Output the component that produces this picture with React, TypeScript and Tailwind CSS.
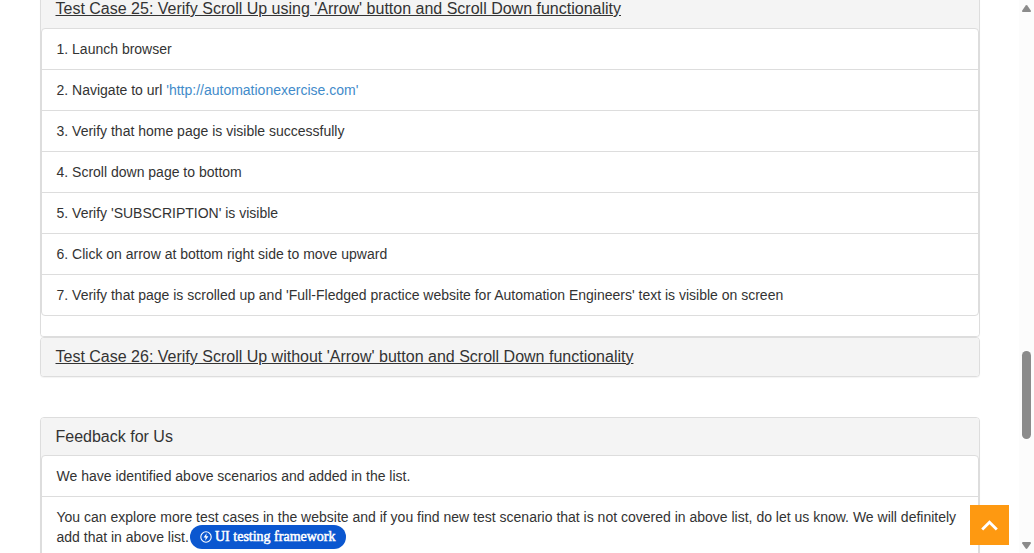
import type { ReactNode } from "react";
import clsx from "clsx";

const scrollSteps: ReactNode[] = [
  "1. Launch browser",
  <>
    2. Navigate to url{" "}
    <a href="http://automationexercise.com" className="text-[#428bca]">
      'http://automationexercise.com'
    </a>
  </>,
  "3. Verify that home page is visible successfully",
  "4. Scroll down page to bottom",
  "5. Verify 'SUBSCRIPTION' is visible",
  "6. Click on arrow at bottom right side to move upward",
  "7. Verify that page is scrolled up and 'Full-Fledged practice website for Automation Engineers' text is visible on screen",
];

const feedback: ReactNode[] = [
  "We have identified above scenarios and added in the list.",
  "You can explore more test cases in the website and if you find new test scenario that is not covered in above list, do let us know. We will definitely add that in above list.",
];

function Panel({ id, title, linked, items }: { id: string; title: string; linked?: boolean; items?: ReactNode[] }) {
  return (
    <section id={id} className="rounded border border-[#ddd] bg-white shadow-[0_1px_1px_rgba(0,0,0,0.05)]">
      <h4
        className={clsx(
          "bg-[#f4f4f4] px-[15px] py-[10px] text-base leading-[17px]",
          items ? "rounded-t-[3px]" : "rounded-[3px]",
          linked && "border-b border-transparent",
        )}
      >
        {linked ? (
          <a href={"#" + id} className="underline">
            {title}
          </a>
        ) : (
          title
        )}
      </h4>
      {items && (
        <div className="rounded-b-[3px] bg-[linear-gradient(#f4f4f4_0_4px,white_4px)] pb-5">
          <ul className="divide-y divide-[#ddd] rounded border border-[#ddd] bg-white">
            {items.map((item, i) => (
              <li key={i} className="px-[15px] py-[10px]">
                {item}
              </li>
            ))}
          </ul>
        </div>
      )}
    </section>
  );
}

function Scrollbar() {
  return (
    <div aria-hidden="true" className="flex w-[15px] shrink-0 flex-col items-center bg-[#fcfcfc] pt-[5px] pb-1">
      <svg width="9" height="7" viewBox="0 0 9 7" fill="#8b8b8b">
        <path d="M3.7.5Q4.5-.4 5.3.5L8.8 5.5Q9.2 7 8 7H1Q-.2 7 .2 5.5Z" />
      </svg>
      <div className="grow-[339]" />
      <div className="h-[88px] w-[9px] rounded-full bg-[#8b8b8b]" />
      <div className="grow-[103]" />
      <svg width="9" height="7" viewBox="0 0 9 7" fill="#8b8b8b">
        <path d="M3.7 6.5Q4.5 7.4 5.3 6.5L8.8 1.5Q9.2 0 8 0H1Q-.2 0 .2 1.5Z" />
      </svg>
    </div>
  );
}

export default function App() {
  return (
    <div className="flex h-screen overflow-hidden bg-white font-['Liberation_Sans',Arial,sans-serif] text-sm leading-5 text-[#333]">
      <div className="relative min-w-0 grow overflow-hidden">
        <main className="mx-auto -mt-[11px] max-w-[940px]">
          <Panel
            id="collapse25"
            title="Test Case 25: Verify Scroll Up using 'Arrow' button and Scroll Down functionality"
            linked
            items={scrollSteps}
          />
          <Panel
            id="collapse26"
            title="Test Case 26: Verify Scroll Up without 'Arrow' button and Scroll Down functionality"
            linked
          />
          <div className="mt-10">
            <Panel id="feedback" title="Feedback for Us" items={feedback} />
          </div>
        </main>
        <a
          href="#framework"
          className="absolute bottom-1 left-[190px] flex h-6 items-center gap-[3px] rounded-full bg-[#0b57d0] px-[10px] font-['Liberation_Serif',serif] text-sm whitespace-nowrap text-white [-webkit-text-stroke:0.5px_white]"
        >
          <svg width="12" height="12" viewBox="0 0 12 12" fill="none" stroke="white" strokeWidth="1.1">
            <circle cx="6" cy="6" r="5.2" />
            <path d="M6.6 2.2 3.6 6.6H5.6L5.3 9.8 8.4 5.3H6.3Z" fill="white" stroke="none" />
          </svg>
          UI testing framework
        </a>
        <button
          type="button"
          aria-label="Scroll to top"
          className="absolute right-[10px] bottom-2 flex h-10 w-[39px] items-center justify-center bg-[#fe9911]"
        >
          <svg width="17" height="11" viewBox="0 0 17 11" fill="none" stroke="white" strokeWidth="2.8">
            <path d="M1.2 9.5 8.5 2.2 15.8 9.5" />
          </svg>
        </button>
      </div>
      <Scrollbar />
    </div>
  );
}
